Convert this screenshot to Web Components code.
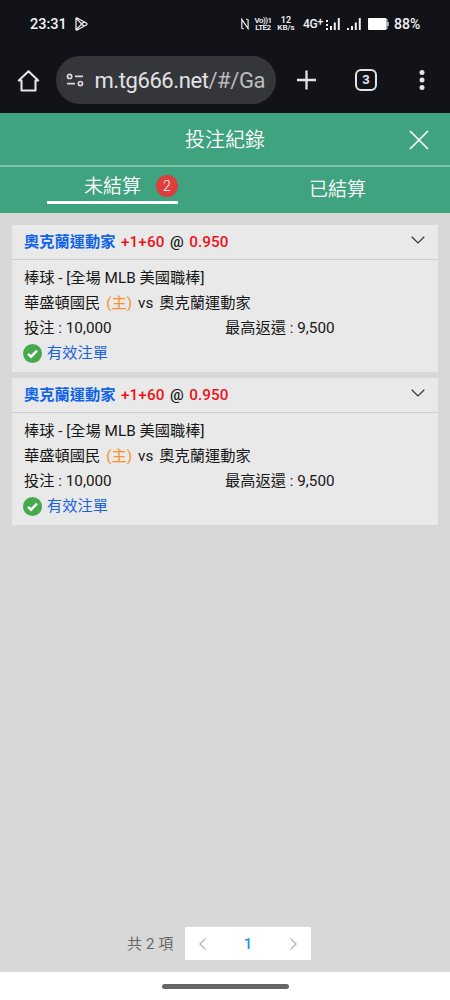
<!DOCTYPE html>
<html lang="zh-Hant">
<head>
<meta charset="utf-8">
<title>投注紀錄</title>
<style>
html,body{margin:0;height:100%}
body{font-family:Roboto,"Noto Sans CJK TC",sans-serif;background:#d8d8d8;overflow:hidden}
</style>
</head>
<body>
<bet-app></bet-app>
<script>
const define = (name, html) => customElements.define(name, class extends HTMLElement {
  constructor() {
    super();
    const t = document.createElement('template');
    t.innerHTML = html;
    this.attachShadow({ mode: 'open' }).append(t.content.cloneNode(true));
  }
});

define('status-bar', `
<style>
:host{display:flex;height:48px;box-sizing:border-box;padding:0 0 0 30px;background:#111318;color:#f2f2f4;align-items:center;font-size:14.5px;font-weight:500;white-space:nowrap}
span{flex:none}
.time{width:37px}
svg{display:block;flex:none}
.play{margin-left:8px}
.nfc{margin-left:153px}
.two{display:flex;flex-direction:column;align-items:center;font-size:8px;line-height:7.5px;font-weight:600}
.volte{margin-left:6px;width:16px;letter-spacing:-.5px}
.rate{margin-left:6px;width:18px;font-size:8px}
.rate .n{font-size:9px}
.net{display:flex;margin-left:8px;width:19px;font-size:12px;letter-spacing:-.4px}
.net sup{font-size:11px;line-height:10px}
.s1{margin-left:4px}.s2{margin-left:7px}.bat{margin-left:7px}
.pct{margin-left:5px;font-size:14px}
</style>
<span class="time">23:31</span>
<svg class="play" width="13" height="14" viewBox="0 0 13 14" fill="none" stroke="#eee" stroke-width="1.3" stroke-linejoin="round"><path d="M1 2.1Q1 .5 2.5 1.2L11.3 6Q12.7 7 11.3 8L2.5 12.8Q1 13.5 1 11.9ZM1.4 1.6 9 9.2M1.4 12.4 9 4.8"/></svg>
<svg class="nfc" width="8" height="12" viewBox="0 0 8 12" fill="none" stroke="#eee" stroke-width="1.2"><path d="M2.6 11 .8 10.2V1.4L7.1 10.6V1.8L5.2 1"/></svg>
<span class="two volte"><span>Vo))1</span><span>LTE2</span></span>
<span class="two rate"><span class="n">12</span><span>KB/s</span></span>
<span class="net">4G<sup>+</sup></span>
<svg class="s1" width="14" height="13" viewBox="0 0 14 13" fill="#eee"><path d="M0 2h2v2H0zM0 6h2v2H0zM0 10h2v2H0zM4 8h2v4H4zM7.8 4.5h2V12h-2zM11.8 0h2v12h-2z"/></svg>
<svg class="s2" width="14" height="13" viewBox="0 0 14 13" fill="#eee"><path d="M0 10h2v2H0zM4 8h2v4H4zM7.8 4.5h2V12h-2zM11.8 0h2v12h-2z"/></svg>
<svg class="bat" width="21" height="12" viewBox="0 0 21 12"><rect x="18" y="1" width="2" height="10" fill="#777"/><rect width="18.5" height="12" rx="1" fill="#fff"/><path d="M19 4h2v4h-2z" fill="#aaa"/></svg>
<span class="pct">88%</span>`);

define('browser-toolbar', `
<style>
:host{display:flex;height:65px;padding:0 17px;background:#111318;align-items:center;color:#e4e4e8}
svg{display:block;flex:none}
.url{display:flex;flex:none;align-items:center;box-sizing:border-box;width:220px;height:48px;margin:0 21px 0 16px;padding-left:10px;border-radius:24px;background:#35363a;font-size:22px;letter-spacing:-.42px;white-space:nowrap;transform:translateY(-1px)}
.url span{color:#bcbcc1}.url b{font-weight:400;color:#e2e2e6}
.text{margin-left:10.5px;padding-top:2px}
.tabs{display:flex;flex:none;align-items:center;justify-content:center;box-sizing:border-box;width:22px;height:22px;border:2.4px solid #e4e4e8;border-radius:6px;margin:0 42px 0 39px;font-size:13px;font-weight:700}
.up{transform:translateY(-1px)}
</style>
<svg width="23" height="24" viewBox="0 0 23 24" fill="none" stroke="#e4e4e8" stroke-width="2.1" stroke-linejoin="round" stroke-linecap="round"><path d="M4.5 11.5H1.8L11.5 2.2 21.2 11.5H18.5V21.5H4.5V11.5Z"/></svg>
<div class="url"><svg width="18" height="16" viewBox="0 0 18 16" fill="none" stroke="#dadade" stroke-width="1.7"><circle cx="3.6" cy="4.4" r="2.1"/><circle cx="14.4" cy="11.6" r="2.1"/><path d="M9 4.4h8M1 11.6H9"/></svg><div class="text"><b>m.tg666.net</b><span>/#/Ga</span></div></div>
<svg class="up" width="19" height="20" viewBox="0 0 19 20" stroke="#e4e4e8" stroke-width="2.3"><path d="M0 10h19M9.5.5v19"/></svg>
<div class="tabs up">3</div>
<svg class="up" width="6" height="20" viewBox="0 0 6 20" fill="#e4e4e8"><circle cx="3" cy="2.6" r="2.5"/><circle cx="3" cy="10" r="2.5"/><circle cx="3" cy="17.4" r="2.5"/></svg>`);

define('page-title', `
<style>
:host{display:grid;grid-template-columns:60px 1fr 60px;box-sizing:border-box;height:54px;border-top:1px solid #3fa37f;border-bottom:2px solid #83c3a9;background:#3fa37f;color:#fff;align-items:center;font-size:20px;line-height:30px;text-align:center;font-weight:350}
svg{display:block;margin-left:19px}
</style>
<i></i><span><slot></slot></span>
<svg width="20" height="20" viewBox="0 0 20 20" stroke="#fff" stroke-width="1.7"><path d="M1 1l18 18M19 1L1 19"/></svg>`);

define('bet-tabs', `
<style>
:host{display:grid;grid-template-columns:1fr 1fr;height:46px;background:#3fa37f;color:#fff;font-size:19px;line-height:28px;font-weight:350}
div{display:flex;box-sizing:border-box}
.on{width:131px;height:37px;margin-left:47px;padding:6px 0 0 37px;border-bottom:3px solid #fff}
.badge{width:22px;height:22px;margin:2px 0 0 15px;border-radius:50%;background:#dd3d3b;font-size:14px;line-height:22px;text-align:center}
.off{justify-content:center;padding-top:9px}
</style>
<div class="on"><span>未結算</span><span class="badge">2</span></div>
<div class="off">已結算</div>`);

define('bet-card', `
<style>
:host{display:block;height:147px;background:#e9e9e9;color:#171717;font-size:15.25px;line-height:25px;white-space:nowrap}
header{display:flex;box-sizing:border-box;height:35px;padding:0 13px 0 12px;border-bottom:1px solid #cfcfcf;align-items:center;font-weight:500}
.team{color:#1163e8;font-weight:700;width:97px}
.red{color:#ee1018;letter-spacing:.1px}
.at{margin:0 5.5px}
header svg{margin:-5px 0 0 auto}
main{padding:6px 12px 5px}
main>div{display:flex}
.home{color:#f7922b;margin:0 6px}
.vs{margin-right:6px}
.bet{width:201px}
.valid{color:#1b62dc;align-items:center}
.valid svg{margin:0 5px 0 -1px}
svg{display:block}
</style>
<header><span class="team">奧克蘭運動家</span><span class="red">+1+60</span><span class="at">@</span><span class="red">0.950</span>
<svg width="14" height="8" viewBox="0 0 14 8" fill="none" stroke="#333" stroke-width="1.2"><path d="M.7.8 7 7 13.3.8"/></svg></header>
<main>
<div>棒球 - [全場 MLB 美國職棒]</div>
<div><span>華盛頓國民</span><span class="home">(主)</span><span class="vs">vs</span><span>奧克蘭運動家</span></div>
<div><span class="bet">投注 : 10,000</span><span>最高返還 : 9,500</span></div>
<div class="valid"><svg width="19" height="19" viewBox="0 0 19 19"><circle cx="9.5" cy="9.5" r="9.5" fill="#46a94c"/><path d="M5 9.8 8.1 12.7 14 6.7" fill="none" stroke="#fff" stroke-width="2.4"/></svg><span>有效注單</span></div>
</main>`);

define('page-nav', `
<style>
:host{display:flex;align-items:center;height:33px;color:#686868;font-size:15px;white-space:nowrap}
.total{width:58px;padding-bottom:2px;letter-spacing:.1px}
.box{display:flex;align-items:center;justify-content:space-between;box-sizing:border-box;width:126px;height:33px;padding:0 14px;background:#fff;color:#3090e2;font-weight:500}
</style>
<span class="total">共 2 項</span>
<div class="box">
<svg width="7" height="12" viewBox="0 0 7 12" fill="none" stroke="#bbb" stroke-width="1.4"><path d="M6.3.8 1 6l5.3 5.2"/></svg>
<span>1</span>
<svg width="7" height="12" viewBox="0 0 7 12" fill="none" stroke="#bbb" stroke-width="1.4"><path d="M.7.8 6 6 .7 11.2"/></svg>
</div>`);

define('gesture-bar', `
<style>
:host{display:flex;height:28px;background:#fff;align-items:center;justify-content:center}
i{width:127px;height:5px;border-radius:3px;background:#666}
</style><i></i>`);

define('bet-app', `
<style>
:host{display:flex;flex-direction:column;height:1000px;background:#d8d8d8}
section{display:flex;flex-direction:column;box-sizing:border-box;flex:1;gap:6px;padding:12px 12px 12px}
page-nav{margin-top:auto;margin-left:115px}
</style>
<status-bar></status-bar>
<browser-toolbar></browser-toolbar>
<page-title>投注紀錄</page-title>
<bet-tabs></bet-tabs>
<section><bet-card></bet-card><bet-card></bet-card><page-nav></page-nav></section>
<gesture-bar></gesture-bar>`);
</script>
</body>
</html>
